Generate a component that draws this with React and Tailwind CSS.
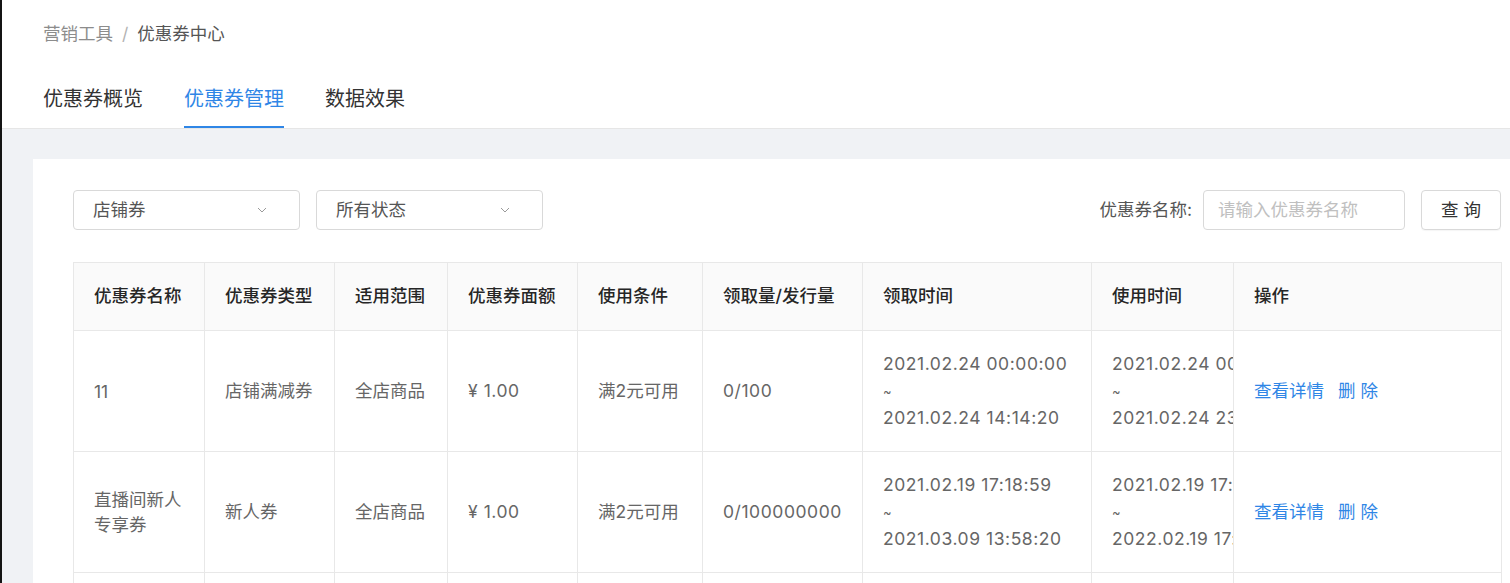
import React from 'react';

const cols = [131, 130, 113, 130, 125, 160, 229, 142, 268];

const heads = ['优惠券名称', '优惠券类型', '适用范围', '优惠券面额', '使用条件', '领取量/发行量', '领取时间', '使用时间', '操作'];

const rows = [
  {
    name: '11',
    type: '店铺满减券',
    range: '全店商品',
    amount: '¥ 1.00',
    cond: '满2元可用',
    qty: '0/100',
    get: ['2021.02.24 00:00:00', '2021.02.24 14:14:20'],
    use: ['2021.02.24 00:00:00', '2021.02.24 23:59:59'],
  },
  {
    name: '直播间新人专享券',
    type: '新人券',
    range: '全店商品',
    amount: '¥ 1.00',
    cond: '满2元可用',
    qty: '0/100000000',
    get: ['2021.02.19 17:18:59', '2021.03.09 13:58:20'],
    use: ['2021.02.19 17:18:59', '2022.02.19 17:18:59'],
  },
  {
    name: '',
    type: '',
    range: '',
    amount: '',
    cond: '',
    qty: '',
    get: null,
    use: null,
  },
];

function Chevron() {
  return (
    <svg width="10" height="6" viewBox="0 0 10 6" fill="none" className="text-[#9a9a9a]">
      <polyline points="1,1 5,5 9,1" stroke="currentColor" strokeWidth="1" />
    </svg>
  );
}

function Select({ label }) {
  return (
    <div className="w-[227px] h-[40px] border border-[#d9d9d9] rounded-[4px] flex items-center justify-between pl-[19px] pr-[32px] text-[#555]">
      <span>{label}</span>
      <Chevron />
    </div>
  );
}

function TimeRange({ range }) {
  if (!range) return null;
  return (
    <div className="whitespace-nowrap leading-[26.5px] tracking-[0.55px]">
      <div>{range[0]}</div>
      <div className="text-[13px] leading-[27px] pt-[1px]">~</div>
      <div>{range[1]}</div>
    </div>
  );
}

export default function App() {
  return (
    <div className="w-[1510px] h-[583px] overflow-hidden border-l-[2px] border-[#141414] bg-[#f0f2f5] font-['Inter','Noto_Sans_CJK_SC',sans-serif] text-[17.5px]">
      {/* header: breadcrumb + tabs */}
      <div className="bg-white border-b border-[#e6e6e6] pl-[41px]">
        <div className="pt-[22px] leading-[24px] text-[17.5px] flex items-center">
          <span className="text-[#8c8c8c]">营销工具</span>
          <span className="text-[#b3b3b3] mx-[9px]">/</span>
          <span className="text-[#555]">优惠券中心</span>
        </div>
        <div className="flex gap-[41px] mt-[39px] text-[20px] leading-[28px]">
          <div className="pb-[13px] border-b-2 border-transparent text-[#333]">优惠券概览</div>
          <div className="pb-[13px] border-b-2 border-[#2f86e6] text-[#2f86e6]">优惠券管理</div>
          <div className="pb-[13px] border-b-2 border-transparent text-[#333]">数据效果</div>
        </div>
      </div>

      {/* content */}
      <div className="pt-[30px] pl-[31px]">
        <div className="bg-white w-[1530px] pl-[40px] pt-[31px] pb-[40px]">
          <div className="w-[1428px] flex items-center justify-between">
            <div className="flex gap-[16px]">
              <Select label="店铺券" />
              <Select label="所有状态" />
            </div>
            <div className="flex items-center">
              <span className="text-[#555]">优惠券名称:</span>
              <div className="ml-[11px] w-[202px] h-[40px] border border-[#d9d9d9] rounded-[4px] flex items-center pl-[14px] text-[#c0c0c0]">
                请输入优惠券名称
              </div>
              <button className="ml-[16px] w-[80px] h-[40px] border border-[#d9d9d9] rounded-[4px] text-[#333] shadow-[0_1px_1px_rgba(0,0,0,0.04)]">
                查 询
              </button>
            </div>
          </div>

          <table className="mt-[32px] table-fixed border-collapse w-[1428px]">
            <colgroup>
              {cols.map((w, i) => (
                <col key={i} style={{ width: w }} />
              ))}
            </colgroup>
            <thead>
              <tr className="h-[68px] bg-[#fafafa]">
                {heads.map((h, i) => (
                  <th
                    key={i}
                    className={`text-left font-medium text-[#262626] border border-[#e8e8e8] px-[20px] whitespace-nowrap ${
                      i === 8 ? 'relative shadow-[-7px_0_8px_-5px_rgba(0,0,0,0.18)]' : ''
                    }`}
                  >
                    {h}
                  </th>
                ))}
              </tr>
            </thead>
            <tbody className="text-[#666]">
              {rows.map((r, i) => (
                <tr key={i} className="h-[121px]">
                  <td className="border border-[#e8e8e8] px-[20px] leading-[25px]">{r.name}</td>
                  <td className="border border-[#e8e8e8] px-[20px]">{r.type}</td>
                  <td className="border border-[#e8e8e8] px-[20px]">{r.range}</td>
                  <td className="border border-[#e8e8e8] px-[20px] tracking-[0.55px]">{r.amount}</td>
                  <td className="border border-[#e8e8e8] px-[20px]">{r.cond}</td>
                  <td className="border border-[#e8e8e8] px-[20px] tracking-[0.55px]">{r.qty}</td>
                  <td className="border border-[#e8e8e8] px-[20px]">
                    <TimeRange range={r.get} />
                  </td>
                  <td className="border border-[#e8e8e8] pl-[20px] overflow-hidden">
                    <TimeRange range={r.use} />
                  </td>
                  <td className="relative border border-[#e8e8e8] px-[20px] shadow-[-7px_0_8px_-5px_rgba(0,0,0,0.18)]">
                    {r.get && (
                      <div className="flex gap-[14px] text-[#2f86e6] whitespace-nowrap">
                        <span>查看详情</span>
                        <span>删 除</span>
                      </div>
                    )}
                  </td>
                </tr>
              ))}
            </tbody>
          </table>
        </div>
      </div>
    </div>
  );
}
